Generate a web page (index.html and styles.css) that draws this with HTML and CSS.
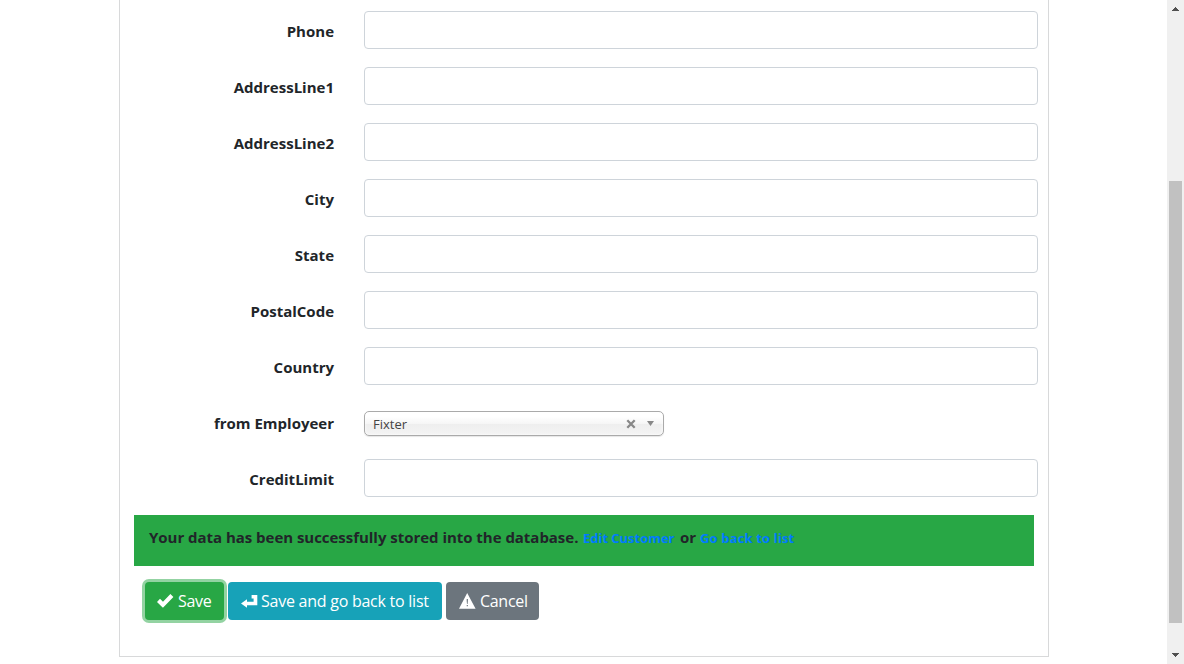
FILE: index.html
```html
<!DOCTYPE html>
<html lang="en">
<head>
<meta charset="utf-8">
<title>Edit Customer</title>
<link rel="stylesheet" href="styles.css">
</head>
<body>
<main class="page">
  <form class="panel">
    <div class="row"><label class="label" for="phone">Phone</label><input class="field" id="phone"></div>
    <div class="row"><label class="label" for="address1">AddressLine1</label><input class="field" id="address1"></div>
    <div class="row"><label class="label" for="address2">AddressLine2</label><input class="field" id="address2"></div>
    <div class="row"><label class="label" for="city">City</label><input class="field" id="city"></div>
    <div class="row"><label class="label" for="state">State</label><input class="field" id="state"></div>
    <div class="row"><label class="label" for="postal">PostalCode</label><input class="field" id="postal"></div>
    <div class="row"><label class="label" for="country">Country</label><input class="field" id="country"></div>
    <div class="row"><span class="label">from Employeer</span>
      <div class="select">
        <span class="select-value">Fixter</span>
        <svg class="clear" viewBox="0 0 10 10"><path d="M1.3 1.3L8.7 8.7M8.7 1.3L1.3 8.7"/></svg>
        <svg class="caret" viewBox="0 0 7 5"><path d="M0 0H7L3.5 5Z"/></svg>
      </div>
    </div>
    <div class="row"><label class="label" for="credit">CreditLimit</label><input class="field" id="credit"></div>
    <div class="message"><span class="message-text">Your data has been successfully stored into the database.</span><a class="link link-edit">Edit Customer</a><span class="or">or</span><a class="link link-list">Go back to list</a></div>
    <div class="actions">
      <button type="button" class="btn save"><svg class="icon" viewBox="0 0 17 16"><path d="M0 9L3 5.8L6 8.8L13.4 1L16.4 3.9L6.2 14.6H5.6Z"/></svg><span>Save</span></button>
      <button type="button" class="btn save-back"><svg class="icon" viewBox="0 0 17 16"><path d="M10.6 2H16.3V12.2H6V14.7L0 10.4L6 6.3V8.8H12.6V5.6H10.6Z"/></svg><span>Save and go back to list</span></button>
      <button type="button" class="btn cancel"><svg class="icon" viewBox="0 0 17 16"><path fill-rule="evenodd" d="M8.2 0L16.6 15.8H0ZM7.7 6V8L8 11H8.6L8.9 8V6ZM7.7 12.1V13.3H8.9V12.1Z"/></svg><span>Cancel</span></button>
    </div>
  </form>
</main>
<div class="scrollbar">
  <svg class="arrow" viewBox="0 0 7 4"><path d="M3 0H4V1H5V2H6V3H7V4H0V3H1V2H2V1H3Z"/></svg>
  <div class="thumb"></div>
  <svg class="arrow" viewBox="0 0 7 4"><path d="M0 0H7V1H6V2H5V3H4V4H3V3H2V2H1V1H0Z"/></svg>
</div>
</body>
</html>
```
FILE: styles.css
```css
* { box-sizing: border-box; }
body {
  margin: 0;
  height: 664px;
  display: flex;
  overflow: hidden;
  background: #fff;
  color: #212529;
  font: 16px/24px "Segoe UI", "Open Sans", "Noto Sans", sans-serif;
}
.page { flex: 1; padding-left: 119px; }
.panel {
  width: 930px;
  height: 657px;
  padding: 11px 10px 0 14px;
  border: 1px solid #d8d9da;
  border-top: 0;
}
.row { display: flex; height: 38px; margin-bottom: 18px; }
.label {
  width: 200px;
  margin-right: 30px;
  padding-top: 8px;
  text-align: right;
  font-weight: 700;
  font-size: 15px;
  white-space: nowrap;
}
.field {
  width: 674px;
  height: 38px;
  border: 1px solid #ced4da;
  border-radius: 4px;
  background: #fff;
}
.select {
  display: flex;
  align-items: center;
  width: 300px;
  height: 25px;
  margin-top: 8px;
  padding: 0 9px 0 8px;
  border: 1px solid #aaa;
  border-radius: 5px;
  background: linear-gradient(#fff 20%, #f6f6f6 50%, #eee 52%, #f4f4f4);
  box-shadow: 0 0 3px #fff inset, 0 1px 1px rgba(0, 0, 0, .1);
  color: #444;
  font-size: 13px;
}
.select-value { flex: 1; padding-top: 1px; }
.clear { width: 10px; height: 10px; margin-right: 11px; fill: none; stroke: #888; stroke-width: 2.3; }
.caret { width: 7px; height: 5px; fill: #888; }
.message {
  display: flex;
  width: 900px;
  height: 51px;
  padding: 10px 15px;
  background: #28a745;
  font-weight: 700;
  font-size: 15px;
  letter-spacing: -0.03px;
  white-space: nowrap;
}
.message-text { width: 434px; }
.link { color: #007bff; font-size: 13px; line-height: 26px; }
.link-edit { width: 97px; }
.or { width: 20px; }
.link-list { letter-spacing: 0.15px; }
.actions { display: flex; margin: 16px 0 0 11px; }
.btn {
  display: flex;
  align-items: center;
  height: 38px;
  padding: 0 0 0 12px;
  border: 0;
  border-radius: 4px;
  color: #fff;
  font: inherit;
  letter-spacing: -0.3px;
  white-space: nowrap;
}
.icon { width: 17px; height: 16px; margin-right: 4px; fill: #fff; flex: none; }
.save { width: 79px; margin-right: 4px; background: #28a745; box-shadow: 0 0 0 3px rgba(40, 167, 69, .5); }
.save-back { width: 214px; margin-right: 4px; padding-left: 13px; background: #17a2b8; }
.save-back .icon { margin-right: 3px; }
.save-back span { letter-spacing: -0.25px; }
.cancel { width: 93px; padding-left: 13px; background: #6c757d; }
.scrollbar {
  display: flex;
  flex-direction: column;
  align-items: center;
  width: 17px;
  padding: 7px 0;
  background: #f0f0f0;
}
.arrow { width: 7px; height: 4px; fill: #505050; shape-rendering: crispEdges; }
.thumb { width: 13px; height: 442px; margin: 170px 0 30px; background: #c1c1c1; }
```
